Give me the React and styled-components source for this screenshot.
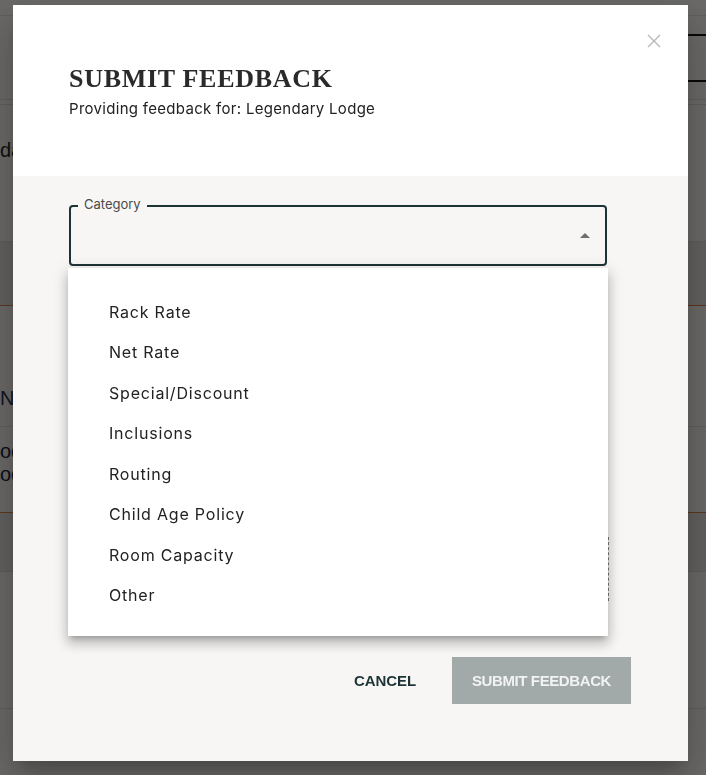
import React from 'react';
import styled, { createGlobalStyle } from 'styled-components';

const GlobalStyle = createGlobalStyle`
  html, body {
    margin: 0;
    padding: 0;
    background: #d6d4d0;
    font-family: Inter, "Liberation Sans", Arial, sans-serif;
  }
  * { box-sizing: border-box; }
`;

const colors = {
  ink: '#222222',
  teal: '#1d3436',
  body: '#f7f6f4',
  muted: '#a1aaa9',
};

const categories = [
  'Rack Rate',
  'Net Rate',
  'Special/Discount',
  'Inclusions',
  'Routing',
  'Child Age Policy',
  'Room Capacity',
  'Other',
];

// page sitting behind the dialog
const Page = styled.div`
  width: 706px;
  height: 775px;
  overflow: hidden;
  background: #d6d4d0;
  color: #1c1c1c;
`;

const PageRow = styled.div`
  height: ${(p) => p.$h}px;
  display: flex;
  align-items: ${(p) => p.$align || 'center'};
  justify-content: space-between;
  background: ${(p) => (p.$dark ? '#c6c4c0' : 'transparent')};
  border-bottom: 1px solid ${(p) => p.$line || 'transparent'};
  font-size: 20px;
  font-family: "Liberation Sans", Arial, sans-serif;
`;

const PageText = styled.div`
  color: ${(p) => p.$color || '#222'};
  line-height: 23px;
  padding-top: ${(p) => p.$top || 0}px;
`;

const PageButton = styled.div`
  height: 48px;
  margin-top: 18px;
  padding: 0 30px 0 11px;
  border-top: 2px solid #111;
  border-bottom: 2px solid #111;
  display: flex;
  align-items: center;
  font-size: 22px;
  color: #111;
`;

const Overlay = styled.div`
  position: fixed;
  inset: 0;
  background: rgba(0, 0, 0, 0.5);
  display: flex;
  align-items: flex-start;
  padding: 5px 0 0 13px;
`;

const Dialog = styled.div`
  position: relative;
  width: 675px;
  height: 756px;
  background: ${colors.body};
  box-shadow: 0 11px 15px -7px rgba(0, 0, 0, 0.2), 0 24px 38px 3px rgba(0, 0, 0, 0.14),
    0 9px 46px 8px rgba(0, 0, 0, 0.12);
  display: flex;
  flex-direction: column;
`;

const Header = styled.div`
  height: 171px;
  background: #ffffff;
  padding: 58px 56px 0;
`;

const Title = styled.h2`
  margin: 0;
  font-family: "Liberation Serif", "Times New Roman", serif;
  font-size: 26px;
  line-height: 31px;
  font-weight: 700;
  letter-spacing: 0.7px;
  color: #2a2a2a;
`;

const Subtitle = styled.p`
  margin: 5px 0 0;
  font-size: 15px;
  line-height: 20px;
  color: ${colors.ink};
  letter-spacing: 0.3px;
`;

const CloseButton = styled.button`
  position: absolute;
  top: 28px;
  right: 26px;
  width: 16px;
  height: 16px;
  padding: 0;
  border: 0;
  background: transparent;
  display: flex;
  align-items: center;
  justify-content: center;
  cursor: pointer;
`;

const Body = styled.div`
  flex: 1;
  padding: 29px 57px 57px 56px;
  display: flex;
  flex-direction: column;
`;

const SelectWrap = styled.div`
  position: relative;
  width: 538px;
`;

const SelectBox = styled.div`
  height: 61px;
  border: 2px solid ${colors.teal};
  border-radius: 4px;
  display: flex;
  align-items: center;
  justify-content: flex-end;
  padding-right: 15px;
`;

const SelectLabel = styled.label`
  position: absolute;
  top: -9px;
  left: 9px;
  padding: 0 6px;
  background: ${colors.body};
  font-size: 13px;
  line-height: 16px;
  color: #4a4a4a;
`;

const Caret = styled.span`
  width: 0;
  height: 0;
  border-left: 5px solid transparent;
  border-right: 5px solid transparent;
  border-bottom: 5px solid #6e6e6e;
`;

const Menu = styled.ul`
  position: absolute;
  top: 63px;
  left: -1px;
  width: 540px;
  margin: 0;
  padding: 23.5px 0 20px;
  list-style: none;
  background: #ffffff;
  z-index: 2;
  box-shadow: 0 5px 5px -3px rgba(0, 0, 0, 0.2), 0 8px 10px 1px rgba(0, 0, 0, 0.14),
    0 3px 14px 2px rgba(0, 0, 0, 0.12);
`;

const MenuItem = styled.li`
  height: 40.5px;
  display: flex;
  align-items: center;
  padding-left: 41px;
  font-size: 16px;
  letter-spacing: 0.8px;
  color: ${colors.ink};
  cursor: pointer;
`;

const Details = styled.div`
  width: 540px;
  height: 64px;
  margin-top: 271px;
  border: 1px dashed #7a7a7a;
`;

const Footer = styled.div`
  margin-top: 56px;
  display: flex;
  justify-content: flex-end;
  gap: 20px;
`;

const Button = styled.button`
  height: 47px;
  padding: 0 ${(p) => (p.$filled ? 20 : 16)}px;
  border: 0;
  border-radius: 0;
  background: ${(p) => (p.$filled ? colors.muted : 'transparent')};
  color: ${(p) => (p.$filled ? '#f1f3f2' : colors.teal)};
  font-family: "Liberation Sans", Arial, sans-serif;
  font-size: 15px;
  font-weight: 700;
  letter-spacing: ${(p) => (p.$filled ? -0.4 : -0.1)}px;
  text-transform: uppercase;
  cursor: pointer;
`;

const CloseIcon = () => (
  <svg width="14" height="14" viewBox="0 0 14 14">
    <path d="M1 1L13 13M13 1L1 13" stroke="#b8b8b8" strokeWidth="1.4" fill="none" />
  </svg>
);

const App = () => (
  <>
    <GlobalStyle />
    <Page>
      <PageRow $h={16} $line="#c2c0bc" />
      <PageRow $h={84} $line="#bdbbb7" $align="flex-start">
        <span />
        <PageButton>Edit</PageButton>
      </PageRow>
      <PageRow $h={5} $line="#bdbbb7" />
      <PageRow $h={137} $line="#bdbbb7" $align="flex-start">
        <PageText $top={34}>da</PageText>
      </PageRow>
      <PageRow $h={64} $dark $line="#c1703c" />
      <PageRow $h={121} $line="#c2c0bc" $align="flex-start">
        <PageText $color="#1e2a4a" $top={81}>N</PageText>
      </PageRow>
      <PageRow $h={86} $line="#c1703c" $align="flex-start">
        <PageText $color="#14213d" $top={13}>
          od
          <br />
          od
        </PageText>
      </PageRow>
      <PageRow $h={59} $dark $line="#bdbbb7" />
      <PageRow $h={137} $line="#bdbbb7" />
    </Page>

    <Overlay>
      <Dialog role="dialog">
        <CloseButton aria-label="Close">
          <CloseIcon />
        </CloseButton>
        <Header>
          <Title>SUBMIT FEEDBACK</Title>
          <Subtitle>Providing feedback for: Legendary Lodge</Subtitle>
        </Header>
        <Body>
          <SelectWrap>
            <SelectLabel>Category</SelectLabel>
            <SelectBox>
              <Caret />
            </SelectBox>
            <Menu>
              {categories.map((c) => (
                <MenuItem key={c}>{c}</MenuItem>
              ))}
            </Menu>
          </SelectWrap>
          <Details />
          <Footer>
            <Button>Cancel</Button>
            <Button $filled>Submit Feedback</Button>
          </Footer>
        </Body>
      </Dialog>
    </Overlay>
  </>
);

export default App;
